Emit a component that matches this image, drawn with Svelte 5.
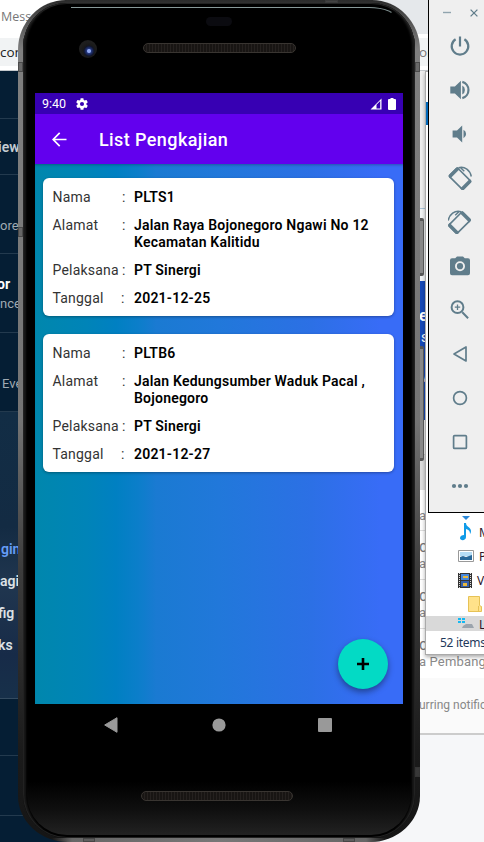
<script>
  const cards = [
    { nama: 'PLTS1', alamat: ['Jalan Raya Bojonegoro Ngawi No 12', 'Kecamatan Kalitidu'], pelaksana: 'PT Sinergi', tanggal: '2021-12-25' },
    { nama: 'PLTB6', alamat: ['Jalan Kedungsumber Waduk Pacal ,', 'Bojonegoro'], pelaksana: 'PT Sinergi', tanggal: '2021-12-27' }
  ];
  const tools = ['power', 'volup', 'voldown', 'rotl', 'rotr', 'camera', 'zoom', 'back', 'home', 'square', 'more'];
</script>

<div class="desktop">
  <div class="browser">
    <div class="tabs"><span class="mess">Mess</span></div>
    <div class="omni"><span>con</span><span class="om2">or</span></div>
    <div class="gap"></div>
    <div class="page">
      <div class="side">
        <div class="row" style:height="48px"></div>
        <div class="row" style:height="56px"><b class="dim">view</b></div>
        <div class="row ore" style:height="79px"><span>ore</span></div>
        <div class="row two" style:height="79px"><b>or</b><span>nce</span></div>
        <div class="row eve" style:height="79px"><span>Eve</span></div>
        <div class="group">
          <b class="blue">gin</b><b>agi</b><b class="fig">fig</b><b class="ks">ks</b>
        </div>
        <div class="row" style:height="57px"></div>
        <div class="row" style:height="60px"></div>
      </div>
      <div class="main">
        <div class="m1"></div>
        <div class="m2"><b>e</b><span>s</span><span class="w">w</span></div>
        <div class="m3"></div>
        <div class="m4"></div>
        <div class="list">
          <div class="item first"><span>at</span></div>
          <div class="item"><i>c</i><span>a</span></div>
          <div class="item"><i>c</i><span>a</span></div>
          <div class="item last"><i>c</i><span>a Pembang</span></div>
        </div>
        <div class="note">urring notific</div>
      </div>
    </div>
  </div>

  <div class="explorer">
    <div class="pane"><div class="accent"></div>
      <div class="files">
        <div class="file down"><svg width="8" height="4" viewBox="0 0 8 4"><path fill="#2b88d8" d="M0 0h8L4 4z"/></svg></div>
        <div class="file"><svg width="16" height="18" viewBox="0 0 16 18"><path d="M6 0h2c0 4 5 4 5 8 0 2-1 3-1 3 0-3-1-4-4-5v8c0 4-6 4-6 1 0-2 2-3 4-3z" fill="#109be8"/></svg><span>M</span></div>
        <div class="file"><svg width="16" height="12" viewBox="0 0 16 12"><path fill="#fff" stroke="#999" d="M.5.5h15v11H.5z"/><path fill="#b4dcf5" d="M2 2h12v4H2z"/><path fill="#286899" d="M2 7l3-1 3 1 6-2v5H2z"/></svg><span>P</span></div>
        <div class="file"><svg width="14" height="15" viewBox="0 0 14 15"><path fill="#333" d="M0 0h14v15H0z"/><path fill="#4889dc" d="M3 1h8v6H3z"/><path fill="#365fac" d="M3 8h8v6H3z"/><path fill="#e8b83e" d="M5 3h5v2H5zm0 7h4v3H5z"/><path stroke="#ddd" stroke-dasharray="1 1" d="M1.5 0v15M12.500 0v15"/></svg><span>V</span></div>
        <div class="file folder"><svg width="14" height="16" viewBox="0 0 14 16"><path fill="#ffe28a" stroke="#e6c256" d="M.5.5h11v9l2 1v5H.5z"/><path stroke="#e6c256" d="M10.500 10v5"/></svg></div>
        <div class="file sel"><svg width="16" height="14" viewBox="0 0 16 14"><path fill="#14b9f2" d="M0 2h3v2H0zm4 0h3v2H4zM0 5h3v2H0zm4 0h3v2H4z"/><path fill="#9ba4ad" d="M5 10l3-2h6l2 4H4z"/></svg><span>L</span></div>
      </div>
    </div>
    <div class="status">52 items</div>
  </div>

  <div class="btn b1"></div><div class="btn b2"></div>

  <div class="phone">
    <div class="foot"></div>
    <div class="inner">
      <div class="shine"></div>
      <div class="sensor"></div>
      <div class="lens"></div>
      <div class="speaker top"></div>
      <div class="bottomglow"></div>
      <div class="speaker bot"></div>
      <div class="screen">
        <div class="sbar">
          <span>9:40</span>
          <svg class="gear" width="14" height="14" viewBox="0 0 24 24"><path fill="#fff" d="M19.430 12.980c.04-.32.07-.64.07-.98s-.03-.66-.07-.98l2.110-1.650c.19-.15.24-.42.12-.64l-2-3.460c-.12-.22-.39-.3-.61-.22l-2.490 1c-.52-.4-1.080-.73-1.690-.98l-.38-2.650A.49.49 0 0 0 14 2h-4a.49.49 0 0 0-.49.42l-.38 2.650c-.61.25-1.170.59-1.690.98l-2.490-1c-.23-.09-.49 0-.61.22l-2 3.460c-.13.22-.07.49.12.64l2.110 1.650c-.04.32-.07.65-.07.98s.03.66.07.98l-2.110 1.650c-.19.15-.24.42-.12.64l2 3.460c.12.22.39.3.61.22l2.490-1c.52.4 1.080.73 1.690.98l.38 2.650c.03.24.24.42.49.42h4c.25 0 .46-.18.49-.42l.38-2.650c.61-.25 1.170-.59 1.690-.98l2.490 1c.23.09.49 0 .61-.22l2-3.460c.12-.22.07-.49-.12-.64zM12 15.500a3.500 3.500 0 1 1 0-7 3.500 3.500 0 0 1 0 7z"/></svg>
          <svg class="sig" width="12" height="12" viewBox="0 0 12 12"><path fill="#fff" fill-rule="evenodd" d="M.5 11.500 11.500.5v11zM6.500 6.800v3.700h3.700V3.100z"/></svg>
          <svg width="8" height="12" viewBox="0 0 8 12"><path fill="#fff" d="M2.500 0h3v1H7q1 0 1 1v9q0 1-1 1H1q-1 0-1-1V2q0-1 1-1h1.500z"/></svg>
        </div>
        <div class="appbar">
          <svg width="15" height="15" viewBox="0 0 15 15"><path fill="none" stroke="#fff" stroke-width="1.700" d="M14.500 7.500H1.500M7.700.9 1.200 7.500l6.500 6.600"/></svg>
          <span>List Pengkajian</span>
        </div>
        <div class="content">
          {#each cards as c}
            <div class="card">
              <div class="line"><span>Nama</span><em>:</em><b>{c.nama}</b></div>
              <div class="line"><span>Alamat</span><em>:</em><b>{#each c.alamat as a}<div>{a}</div>{/each}</b></div>
              <div class="line"><span>Pelaksana</span><em>:</em><b>{c.pelaksana}</b></div>
              <div class="line tgl"><span>Tanggal</span><em>:</em><b>{c.tanggal}</b></div>
            </div>
          {/each}
          <div class="fab"><svg width="12" height="12" viewBox="0 0 12 12"><path stroke="#000" stroke-width="2.600" d="M6 0v12M0 6h12"/></svg></div>
        </div>
      </div>
      <div class="nav">
        <svg width="15" height="16" viewBox="0 0 15 16"><path fill="#999" d="M13 .7v14.600L.7 8z" stroke="#999" stroke-linejoin="round"/></svg>
        <svg width="14" height="14" viewBox="0 0 14 14"><circle cx="7" cy="7" r="6.600" fill="#999"/></svg>
        <svg width="14" height="14" viewBox="0 0 14 14"><rect width="14" height="14" rx="1" fill="#999"/></svg>
      </div>
    </div>
    <i class="band l1"></i><i class="band l2"></i><i class="band r1"></i><i class="band r2"></i>
    <i class="band t1"></i><i class="band u1"></i><i class="band u2"></i>
  </div>

  <div class="toolbar">
    <div class="wctl">
      <svg width="8" height="8" viewBox="0 0 8 8"><path stroke="#90a4ae" stroke-width="1.400" d="M0 3.500h8"/></svg>
      <svg width="8" height="8" viewBox="0 0 8 8"><path stroke="#607d8b" stroke-width="1.300" d="M.6.6l6.800 6.800M7.400.6.6 7.400"/></svg>
    </div>
    {#each tools as t}
      <div class="tool">
        <svg width="24" height="24" viewBox="0 0 24 24">
          {#if t === 'power'}<path class="s" stroke-width="2.200" d="M12 2.600v9.800M7.600 5.200a8.300 8.300 0 1 0 8.800 0"/>
          {:else if t === 'volup'}<path d="M2.300 8.500v7h4.600l6 5.700V2.800l-6 5.700zM14.300 7.600v8.800a5 5 0 0 0 0-8.800z"/><path class="s" stroke-width="2.200" d="M14.300 3.900a8.400 8.400 0 0 1 0 16.200"/>
          {:else if t === 'voldown'}<path d="M4.600 8.500v7h4.400l5.200 5V3.500L9 8.500zM15.500 7.800v8.400a4.700 4.700 0 0 0 0-8.400z"/>
          {:else if t === 'rotl' || t === 'rotr'}
            <g transform={t === 'rotr' ? 'matrix(-1 0 0 1 23.500 0)' : ''}>
              <g transform="rotate(45 12 12.700)"><rect class="s" stroke-width="1.600" x="2.300" y="6.800" width="19.400" height="11.800" rx="1.500"/><path d="M1.500 8q0-2 2-2h1.500v13.400H3.500q-2 0-2-2zM19 6h1.500q2 0 2 2v9.400q0 2-2 2H19z"/></g>
              <path class="s" stroke-width="1.500" d="M10.500 1.700C17 .2 22 4 23.300 10.500M12.300 1.500l4 3.700"/>
            </g>
          {:else if t === 'camera'}<path fill-rule="evenodd" d="M9 2.500 7.200 4.300H4a2 2 0 0 0-2 2v13q0 2 2 2h16q2 0 2-2v-13a2 2 0 0 0-2-2h-3.200L15 2.500zm3 4.700a5 5 0 1 1 0 10 5 5 0 0 1 0-10z"/><circle cx="12" cy="12.200" r="3.100"/>
          {:else if t === 'zoom'}<path class="s" stroke-width="2" d="M14.300 14.300l5.800 6M9.500 3.300a5.900 5.900 0 1 1 0 11.800 5.900 5.900 0 0 1 0-11.800"/><path class="s" stroke-width="1.300" d="M9.500 6.500v5.400M6.800 9.200h5.400"/>
          {:else if t === 'back'}<path class="s" stroke-width="1.700" stroke-linejoin="round" d="M18 5v14L6 12z"/>
          {:else if t === 'home'}<circle class="s" stroke-width="1.700" cx="12" cy="12" r="6.400"/>
          {:else if t === 'square'}<rect class="s" stroke-width="1.700" x="5.600" y="5.600" width="12.800" height="12.800" rx="1"/>
          {:else}<circle cx="6" cy="12" r="2.100"/><circle cx="12" cy="12" r="2.100"/><circle cx="18" cy="12" r="2.100"/>{/if}
        </svg>
      </div>
    {/each}
  </div>
</div>

<style>
  :global(body) { margin: 0; overflow: hidden; }
  * { box-sizing: border-box; }
  svg { display: block; flex: none; }
  .desktop { position: relative; width: 484px; height: 842px; overflow: hidden; background: #f6f7f9; font-family: Roboto, sans-serif; }
  .browser { height: 842px; display: flex; flex-direction: column; }
  .tabs { height: 38px; background: linear-gradient(90deg, #fff 50%, #e5e8eb 50%); border-bottom: 4px solid #fff; font: 12.500px/34px "Open Sans", sans-serif; color: #777; padding-left: 1px; }
  .omni { height: 28px; background: #f1f3f4; display: flex; justify-content: space-between; font: 13.500px/28px "Open Sans", sans-serif; color: #222; }
  .om2 { width: 65px; color: #777; }
  .gap { height: 5px; background: #fff; border-bottom: 1px solid #c4c8cc; }
  .page { flex: 1; display: flex; }
  .side { width: 240px; background: #051e34; color: #a0aab2; font-size: 13px; }
  .row { display: flex; align-items: center; border-bottom: 1px solid #233a4e; }
  .row b, .group b { color: #f2f4f6; font-weight: 600; font-size: 14px; }
  .row .dim { margin-left: -9px; color: #c5ccd2; }
  .ore { padding-top: 22px; }
  .two { flex-direction: column; align-items: flex-start; justify-content: center; gap: 4px; padding-top: 1px; }
  .two b { color: #fff; font-weight: 700; margin-left: -3px; }
  .two span { margin-left: 0; }
  .eve { padding: 22px 0 0 2px; }
  .group { height: 287px; background: linear-gradient(#122d45, #132b43 40%, #20364f 60%, #172b48 85%, #17304a); border-bottom: 1px solid #344b60; padding-top: 121px; display: flex; flex-direction: column; }
  .group b { height: 32px; line-height: 32px; color: #dde1e5; }
  .group .blue { color: #669df6; margin-left: 1px; }
  .group .fig, .group .ks { margin-left: -2px; }
  .main { width: 244px; background: #f6f7f9; padding-left: 179px; display: flex; flex-direction: column; }
  .main > div { flex: none; }
  .m1 { height: 210px; background: linear-gradient(#eee 0 137px, #a9c3d6 137px 138px, #f2f4f5 138px); }
  .m2 { height: 139px; background: #1749b8; color: #fff; display: flex; flex-direction: column; font-size: 16px; padding-top: 25px; }
  .m2 span { margin-left: 2px; font-size: 14px; line-height: 24px; }
  .m2 .w { margin-top: 16px; color: #b8c8ee; }
  .m3 { height: 35px; background: #efefef; border-bottom: 1px solid #ccc; }
  .m4 { height: 35px; background: #dedede; }
  .list { height: 188px; background: #fff; font-size: 13px; line-height: 17px; color: #8a8a8a; white-space: nowrap; }
  .item { height: 49px; border-bottom: 1px solid #ddd; padding-top: 7px; display: flex; flex-direction: column; }
  .item.first { height: 41px; padding-top: 17px; }
  .item.last { border: 0; }
  .item.last span { letter-spacing: .15px; }
  .item i { font-style: normal; font-size: 16px; color: #777; }
  .note { height: 57px; background: #fafafa; border-bottom: 2px solid #ccc; font-size: 12px; line-height: 55px; color: #888; white-space: nowrap; }
  .explorer { position: absolute; left: 425px; top: 71px; width: 70px; height: 584px; background: #fff; border: 1px solid #aaa; box-shadow: 0 2px 4px #0005; }
  .pane { height: 559px; display: flex; flex-direction: column; }
  .accent { height: 23px; margin-top: 30px; background: #0067b8; flex: none; }
  .files { margin-top: 386px; display: flex; flex-direction: column; }
  .file { height: 24px; flex: none; display: flex; align-items: center; padding-left: 32px; gap: 5px; font: 12px "Noto Sans", sans-serif; color: #301528; }
  .down { height: 9px; align-items: flex-end; padding-left: 36px; }
  .folder { padding-left: 42px; }
  .sel { height: 15px; background: #d9d9d9; overflow: hidden; align-items: flex-start; }
  .status { height: 23px; font: 12px/23px "Noto Sans", sans-serif; letter-spacing: -.3px; color: #1e395b; padding-left: 14px; white-space: nowrap; }
  .btn { position: absolute; left: 417px; width: 6.500px; background: #888; border: 1px solid #555; border-width: 3px 1px; border-radius: 2px; }
  .b1 { top: 218px; height: 58px; }
  .b2 { top: 346px; height: 115px; }
  .phone { position: absolute; left: 18px; top: 0; width: 402px; height: 842px; border-radius: 48px 48px 50px 50px / 50px 50px 46px 46px; background: linear-gradient(#2a2a2a 0, #484848 14px, #808080 50px, #747474 420px, #3c3c3c 570px, #1b1b1b 750px, #151515 842px); overflow: hidden; }
  .foot { position: absolute; left: 34px; right: 34px; bottom: 0; height: 4px; background: linear-gradient(90deg, #2220, #666 20px, #777 50%, #666 calc(100% - 20px), #2220); }
  .inner { position: absolute; left: 5px; right: 5px; top: 3px; bottom: 4px; border-radius: 44px; background: #000; box-shadow: inset 0 0 0 1px #222, inset 5px 0 2px -2px #191919, inset -5px 0 2px -2px #191919; padding: 90px 12px 0; overflow: hidden; }
  .shine { position: absolute; left: 48px; right: 18px; top: 4px; height: 14px; border-top: 1px solid #899; border-right: 1px solid transparent; border-radius: 0 28px 0 0 / 0 12px 0 0; }
  .sensor { position: absolute; left: 183px; top: 14px; width: 26px; height: 9px; border-radius: 5px; background: #0b0b10; }
  .lens { position: absolute; left: 56px; top: 37px; width: 18px; height: 18px; border-radius: 50%; background: radial-gradient(circle at 10px 11px, #8fa8f2 0 1.500px, #22357c 2.500px, #101529 5px, #191919 6px, #1e1e1e 9px); }
  .speaker { position: absolute; height: 10px; border-radius: 5px; border: 1px solid #393531; background: repeating-linear-gradient(90deg, #181513 0 2px, #25211f 2px 3px); }
  .top { left: 120px; top: 40px; width: 153px; }
  .bot { left: 118px; top: 788px; width: 152px; }
  .bottomglow { position: absolute; left: 4px; right: 4px; bottom: 3px; height: 54px; background: linear-gradient(#0000, #0e0e0e 50%, #222); border-radius: 0 0 40px 40px; }
  .screen { width: 368px; height: 611px; position: relative; display: flex; flex-direction: column; }
  .sbar { height: 21px; background: #3700b3; display: flex; align-items: center; color: #fff; font-size: 12.500px; padding: 0 7px; }
  .gear { margin-left: 9px; }
  .sig { margin-left: auto; margin-right: 6px; }
  .appbar { height: 50px; background: #6200ee; color: #fff; display: flex; align-items: center; padding-left: 17px; gap: 32px; font-size: 18px; font-weight: 500; letter-spacing: .4px; }
  .content { height: 540px; padding: 13.500px 9px 0 8px; background: linear-gradient(90deg, #0087ad, #0084b8 14%, #0080c2 22%, #0b7eca 28%, #1a7ad2 33%, #2178da 50%, #2c70e5 75%, #386cf7 94%, #386cf7); box-shadow: inset 0 3px 3px -2px #0004; }
  .card { height: 138.500px; margin-bottom: 17.500px; background: #fff; border-radius: 6px; box-shadow: 0 1px 3px #0005; padding: 11px 9px 0 9.500px; font-size: 14px; line-height: 17px; color: #333; }
  .line { display: flex; margin-bottom: 11.600px; }
  .line span { width: 69.500px; letter-spacing: .2px; font-weight: 400; }
  .line em { font-style: normal; width: 12px; }
  .tgl em { position: relative; left: -1px; }
  .line b { font-weight: 600; color: #000; line-height: 16.600px; white-space: nowrap; letter-spacing: .21px; }
  .fab { position: absolute; left: 303px; top: 546px; width: 50px; height: 50px; border-radius: 50%; background: #03dac5; box-shadow: 0 3px 6px #0006; display: flex; align-items: center; justify-content: center; }
  .nav { height: 42px; display: flex; align-items: center; justify-content: space-between; padding: 0 71px 0 69px; }
  .band { position: absolute; background: #5558; border: 1px solid #3338; }
  .l1, .r1 { top: 62px; width: 5px; height: 10px; }
  .l2 { top: 227px; width: 5px; height: 10px; left: 0; }
  .l1 { left: 0; } .r1 { right: 0; }
  .r2 { right: 0; top: 767px; width: 5px; height: 10px; }
  .t1 { left: 307px; top: 0; width: 13px; height: 3px; }
  .u1, .u2 { bottom: 0; width: 12px; height: 4px; }
  .u1 { left: 65px; } .u2 { left: 325px; }
  .toolbar { position: absolute; left: 428px; top: -1px; width: 64px; height: 514px; background: #efefef; border: 1px solid #000; display: flex; flex-direction: column; }
  .wctl { height: 24px; display: flex; align-items: center; padding: 2px 0 0 14px; gap: 19px; }
  .tool { height: 44px; width: 62px; display: flex; align-items: center; padding-left: 19px; }
  .tool svg { fill: #607d8b; }
  .tool .s { fill: none; stroke: #607d8b; }
</style>
